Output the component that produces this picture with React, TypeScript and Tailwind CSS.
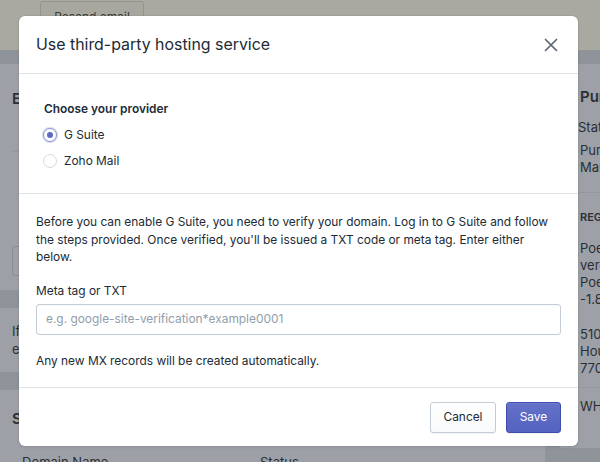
import React from "react";

const font = { fontFamily: "Inter, 'Noto Sans', sans-serif" };

function Radio({ checked, label }: { checked: boolean; label: string }) {
  return (
    <label className="flex items-center h-[18px] gap-[7px] ml-[-1px]">
      <span
        className={
          checked
            ? "w-[14px] h-[14px] rounded-full border border-[#8b93cf] bg-white flex items-center justify-center shadow-[0_0_0_1px_rgba(92,106,196,0.25)]"
            : "w-[14px] h-[14px] rounded-full border border-[#d5dae0] bg-white"
        }
      >
        {checked && <span className="w-[6px] h-[6px] rounded-full bg-[#5c6ac4]" />}
      </span>
      <span className="text-[11.9px] text-[#212b36]">{label}</span>
    </label>
  );
}

export default function App() {
  return (
    <div className="relative w-[600px] h-[462px] overflow-hidden bg-[#8f939a] text-[#2a2f35]" style={font}>
      {/* dimmed background page */}
      <div className="h-[50px] bg-[#aaa9a1] flex items-start pl-[40px] pt-[1px]">
        <div className="w-[104px] h-[32px] border border-[#93928b] rounded-[3px] bg-[#a8a79f] text-[12px] text-[#3a3a38] flex items-center justify-center">
          Resend email
        </div>
      </div>
      <div className="flex gap-[15px] pt-[14px]">
        <div className="ml-[-20px] w-[565px] shrink-0 flex flex-col gap-[18px]">
          <div className="bg-[#9da1a7] h-[226px] pl-[32px] pt-[24px] flex flex-col">
            <div className="text-[15px] font-semibold">Email forwarding</div>
            <div className="h-[1px] bg-[#94989e] mt-[40px]" />
            <div className="mt-[94px] h-[30px] w-[200px] border border-[#8a8e94] rounded-[3px]" />
          </div>
          <div className="bg-[#9da1a7] h-[64px] pl-[32px] pt-[14px] text-[13px] leading-[18px]">
            <div>If you want to use this domain for</div>
            <div>email, set up forwarding.</div>
          </div>
          <div className="bg-[#9da1a7] h-[100px] pl-[32px] pt-[18px]">
            <div className="text-[15px] font-semibold">Subdomains</div>
            <div className="mt-[22px] text-[13px] flex pl-[10px]">
              <span className="w-[238px]">Domain Name</span>
              <span>Status</span>
            </div>
          </div>
        </div>
        <div className="bg-[#9da1a7] w-[200px] h-[384px] shrink-0 pl-[20px] pt-[24px] text-[13px] leading-[17px]">
          <div className="text-[15px] font-semibold">Purchase</div>
          <div className="mt-[14px] ml-[-2px]">Status</div>
          <div className="mt-[6px]">Purchased</div>
          <div>Manage</div>
          <div className="h-[1px] bg-[#94989e] mt-[16px] ml-[-20px]" />
          <div className="mt-[16px] text-[11px] font-semibold">REGISTRANT</div>
          <div className="mt-[14px]">PoeOrg</div>
          <div>veronica</div>
          <div>PoeOrg</div>
          <div>-1.833</div>
          <div className="mt-[18px]">5100</div>
          <div>Houston</div>
          <div>77095</div>
          <div className="h-[1px] bg-[#94989e] mt-[10px] ml-[-20px]" />
          <div className="mt-[10px] text-[13px]">WHOIS</div>
        </div>
      </div>

      {/* modal */}
      <div className="absolute left-[19px] top-[16px] w-[559px] h-[430px] bg-white rounded-[6px] flex flex-col text-[#212b36] shadow-[0_0_0_1px_rgba(63,63,68,0.05),0_1px_3px_rgba(63,63,68,0.15)]">
        <div className="h-[58px] shrink-0 flex items-center justify-between pl-[17px] pr-[20px] border-b border-[#dfe3e8]">
          <div className="text-[15.9px] leading-[22px]">Use third-party hosting service</div>
          <svg width="14" height="14" viewBox="0 0 14 14" className="mt-[1px]">
            <path d="M1.5 1.5 L12.5 12.5 M12.5 1.5 L1.5 12.5" stroke="#5c6670" strokeWidth="1.7" strokeLinecap="round" />
          </svg>
        </div>
        <div className="h-[120px] shrink-0 border-b border-[#dfe3e8] pl-[25px] pt-[26px] flex flex-col gap-[8px]">
          <div className="text-[11.9px] leading-[18px] font-semibold">Choose your provider</div>
          <Radio checked label="G Suite" />
          <Radio checked={false} label="Zoho Mail" />
        </div>
        <div className="h-[194px] shrink-0 border-b border-[#dfe3e8] px-[17px] pt-[19px] text-[11.9px]">
          <p className="leading-[17.5px] w-[520px]">
            Before you can enable G Suite, you need to verify your domain. Log in to G Suite and follow the steps provided. Once verified, you'll be issued a TXT code or meta tag. Enter either below.
          </p>
          <div className="mt-[16px] leading-[18px]">Meta tag or TXT</div>
          <div className="mt-[4px] h-[31px] border border-[#c4cdd5] rounded-[3px] flex items-center pl-[9px] text-[#919eab] shadow-[inset_0_1px_0_rgba(99,115,129,0.05)]">
            e.g. google-site-verification*example0001
          </div>
          <div className="mt-[17px] leading-[18px]">Any new MX records will be created automatically.</div>
        </div>
        <div className="flex-1 flex items-center justify-end gap-[10px] pr-[17px]">
          <button className="h-[31px] w-[66px] rounded-[3px] border border-[#c4cdd5] bg-gradient-to-b from-white to-[#f9fafb] text-[11.9px] text-[#212b36] shadow-[0_1px_0_rgba(22,29,37,0.05)]">
            Cancel
          </button>
          <button className="h-[31px] w-[55px] rounded-[3px] border border-[#3f4eae] bg-gradient-to-b from-[#6371c7] to-[#5563c1] text-[11.9px] text-white shadow-[inset_0_1px_0_0_#6f7bcb,0_1px_0_rgba(22,29,37,0.05)]">
            Save
          </button>
        </div>
      </div>
    </div>
  );
}
